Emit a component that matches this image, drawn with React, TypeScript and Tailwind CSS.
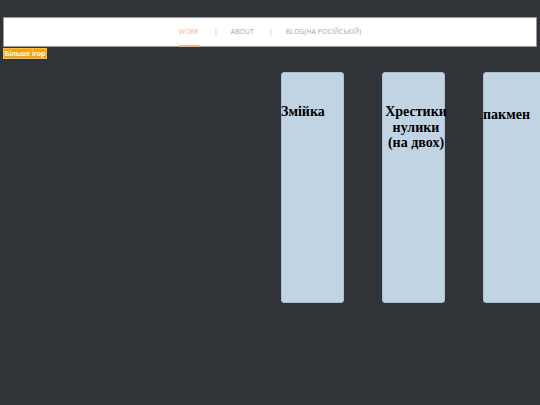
import React from "react";

export default function App() {
  return (
    <div className="w-[540px] h-[405px] overflow-hidden bg-[#303338] relative" style={{ fontFamily: '"Open Sans", sans-serif' }}>
      <div className="h-[17px]" />
      <nav className="mx-[3px] w-[534px] h-[30px] bg-white border border-[#9a9a9a] flex justify-center items-stretch">
        <div className="flex items-center text-[6.8px] tracking-[0.1px] text-[#a4a4a4] whitespace-nowrap" style={{ fontFamily: '"Open Sans", sans-serif' }}>
          <div className="relative h-full flex items-center">
            <span className="text-[#f2b08c]">WORK</span>
            <div className="absolute left-0 bottom-[-1px] w-[21px] h-[2px] bg-[#f2b08c]" />
          </div>
          <span className="ml-[15px] mr-[13px] text-[#b0b0b0]">|</span>
          <span>ABOUT</span>
          <span className="ml-[15px] mr-[13px] text-[#b0b0b0]">|</span>
          <span>BLOG(НА РОСІЙСЬКІЙ)</span>
        </div>
      </nav>
      <div className="mx-[3px] mt-[1px] w-[44px] h-[11px] bg-[#f5a40c] border border-[#f8be50] flex items-center justify-center">
        <span className="text-white font-bold text-[7px] leading-none whitespace-nowrap" style={{ fontFamily: '"Liberation Sans", Arial, sans-serif' }}>Більше ігор</span>
      </div>
      <div className="flex gap-[38px] pl-[281px] mt-[13px] w-[800px]" style={{ fontFamily: '"Liberation Serif", "Times New Roman", serif' }}>
        <div className="w-[63px] h-[231px] shrink-0 bg-[#c0d4e4] rounded-[3px] border border-[#aebfcf]">
          <div className="mt-[31px] text-[14px] leading-[16px] font-bold text-black text-left -ml-[1px]">Змійка</div>
        </div>
        <div className="w-[63px] h-[231px] shrink-0 bg-[#c0d4e4] rounded-[3px] border border-[#aebfcf]">
          <div className="mt-[31px] text-[14px] leading-[15.5px] font-bold text-black text-center w-[66px] ml-[0px] whitespace-nowrap">Хрестики<br />нулики<br />(на двох)</div>
        </div>
        <div className="w-[63px] h-[231px] shrink-0 bg-[#c0d4e4] rounded-[3px] border border-[#aebfcf]">
          <div className="mt-[34px] text-[14px] leading-[16px] font-bold text-black text-left -ml-[1px]">пакмен</div>
        </div>
      </div>
    </div>
  );
}
